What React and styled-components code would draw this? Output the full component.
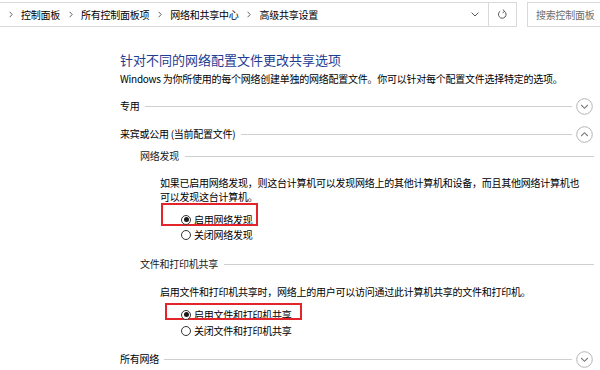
import styled, { createGlobalStyle } from "styled-components";

const GlobalStyle = createGlobalStyle`
  html, body {
    margin: 0;
    padding: 0;
    background: #ffffff;
    overflow: hidden;
  }
  body {
    width: 600px;
    height: 370px;
    font-family: "Noto Sans CJK SC", "Noto Sans", sans-serif;
    letter-spacing: -0.25px;
    color: #000000;
  }
`;

function CircleChevron({ up }) {
  return (
    <svg width="17" height="17" viewBox="0 0 17 17">
      <circle cx="8.5" cy="8.5" r="7.8" fill="#ffffff" stroke="#b4b4b4" strokeWidth="1" />
      <path
        d={up ? "M5.2 10 L8.5 6.7 L11.8 10" : "M5.2 7 L8.5 10.3 L11.8 7"}
        fill="none"
        stroke="#7a7a7a"
        strokeWidth="1.1"
      />
    </svg>
  );
}

function CrumbChevron() {
  return (
    <svg width="4" height="7" viewBox="0 0 4 7">
      <path d="M0.6 0.8 L3.2 3.5 L0.6 6.2" fill="none" stroke="#606060" strokeWidth="1" />
    </svg>
  );
}

function RefreshIcon() {
  return (
    <svg width="11" height="11" viewBox="0 0 11 11">
      <path d="M7.6 2.4 A3.8 3.8 0 1 1 3.2 2.2" fill="none" stroke="#555" strokeWidth="1" />
      <path d="M5.8 0.6 L7.8 2.4 L5.6 3.8" fill="none" stroke="#555" strokeWidth="1" />
    </svg>
  );
}

export default function App() {
  return (
    <>
      <GlobalStyle />
      <TopBar>
        <AddressBox>
          <Crumbs>
            {["控制面板", "所有控制面板项", "网络和共享中心", "高级共享设置"].map((c) => (
              <Crumb key={c}>
                <Sep>
                  <CrumbChevron />
                </Sep>
                {c}
              </Crumb>
            ))}
          </Crumbs>
          <DropButton>
            <svg width="8" height="5" viewBox="0 0 8 5">
              <path d="M0.6 0.6 L4 4 L7.4 0.6" fill="none" stroke="#555" strokeWidth="1" />
            </svg>
          </DropButton>
          <RefreshButton>
            <RefreshIcon />
          </RefreshButton>
        </AddressBox>
        <SearchBox>搜索控制面板</SearchBox>
      </TopBar>

      <Content>
        <Title>针对不同的网络配置文件更改共享选项</Title>
        <Text $mt={4}>
          Windows 为你所使用的每个网络创建单独的网络配置文件。你可以针对每个配置文件选择特定的选项。
        </Text>

        <ProfileRow $mt={11}>
          <span>专用</span>
          <Rule />
          <CircleChevron />
        </ProfileRow>

        <ProfileRow $mt={10}>
          <span>来宾或公用 (当前配置文件)</span>
          <Rule />
          <CircleChevron up />
        </ProfileRow>

        <SubHeader $mt={6}>
          <span>网络发现</span>
          <Rule />
        </SubHeader>
        <Body>
          <Text $mt={13}>
            如果已启用网络发现，则这台计算机可以发现网络上的其他计算机和设备，而且其他网络计算机也
            <br />
            可以发现这台计算机。
          </Text>
          <RadioGroup $mt={8} $gap={0}>
            <Option $hl={{ left: -20, top: -9, width: 97, height: 23 }}>
              <Radio $checked />
              启用网络发现
            </Option>
            <Option>
              <Radio />
              关闭网络发现
            </Option>
          </RadioGroup>
        </Body>

        <SubHeader $mt={15}>
          <span>文件和打印机共享</span>
          <Rule />
        </SubHeader>
        <Body>
          <Text $mt={14}>启用文件和打印机共享时，网络上的用户可以访问通过此计算机共享的文件和打印机。</Text>
          <RadioGroup $mt={8} $gap={1}>
            <Option $hl={{ left: -16, top: -4, width: 137, height: 17 }}>
              <Radio $checked />
              启用文件和打印机共享
            </Option>
            <Option>
              <Radio />
              关闭文件和打印机共享
            </Option>
          </RadioGroup>
        </Body>

        <ProfileRow $mt={12}>
          <span>所有网络</span>
          <Rule />
          <CircleChevron />
        </ProfileRow>
      </Content>
    </>
  );
}

const TopBar = styled.div`
  display: flex;
  gap: 10px;
  padding-top: 2px;
  height: 25px;
`;

const AddressBox = styled.div`
  display: flex;
  align-items: stretch;
  width: 518px;
  margin-left: -1px;
  border: 1px solid #d9d9d9;
  box-sizing: border-box;
  flex-shrink: 0;
`;

const Crumbs = styled.div`
  flex: 1;
  display: flex;
  align-items: center;
  font-size: 10px;
  line-height: 12px;
`;

const Crumb = styled.span`
  display: inline-flex;
  align-items: center;
`;

const Sep = styled.span`
  display: inline-flex;
  justify-content: center;
  align-items: center;
  width: 21px;
`;

const DropButton = styled.div`
  width: 24px;
  display: flex;
  align-items: center;
  justify-content: center;
  margin-right: 1px;
`;

const RefreshButton = styled.div`
  width: 27px;
  display: flex;
  align-items: center;
  justify-content: center;
  border-left: 1px solid #d9d9d9;
`;

const SearchBox = styled.div`
  flex-shrink: 0;
  width: 100px;
  border: 1px solid #d9d9d9;
  box-sizing: border-box;
  display: flex;
  align-items: center;
  padding-left: 8px;
  font-size: 10px;
  color: #6d6d6d;
`;

const Content = styled.div`
  padding: 0 7px 0 120px;
`;

const Title = styled.div`
  margin-top: 25px;
  font-size: 13px;
  line-height: 16px;
  letter-spacing: 0;
  color: #1f3c92;
`;

const Text = styled.div`
  margin-top: ${(p) => p.$mt || 0}px;
  font-size: 10px;
  line-height: 14px;
  white-space: nowrap;
`;

const ProfileRow = styled.div`
  margin-top: ${(p) => p.$mt || 0}px;
  display: flex;
  align-items: center;
  gap: 5px;
  height: 18px;
  font-size: 10px;
  line-height: 14px;

  svg {
    flex-shrink: 0;
  }
`;

const Rule = styled.div`
  flex: 1;
  height: 1px;
  background: #cfcfcf;
  margin-right: -1px;
`;

const SubHeader = styled.div`
  margin-top: ${(p) => p.$mt || 0}px;
  margin-left: 20px;
  display: flex;
  align-items: center;
  gap: 6px;
  height: 14px;
  font-size: 10px;
  line-height: 14px;
  color: #1a1a1a;
`;

const Body = styled.div`
  margin-left: 40px;
`;

const RadioGroup = styled.div`
  margin-top: ${(p) => p.$mt || 0}px;
  margin-left: 21px;
  display: flex;
  flex-direction: column;
  gap: ${(p) => p.$gap}px;
`;

const Option = styled.div`
  position: relative;
  display: flex;
  align-items: center;
  gap: 3px;
  height: 15px;
  font-size: 10px;
  line-height: 14px;

  &::before {
    content: "";
    display: ${(p) => (p.$hl ? "block" : "none")};
    position: absolute;
    left: ${(p) => (p.$hl ? p.$hl.left : 0)}px;
    top: ${(p) => (p.$hl ? p.$hl.top : 0)}px;
    width: ${(p) => (p.$hl ? p.$hl.width : 0)}px;
    height: ${(p) => (p.$hl ? p.$hl.height : 0)}px;
    border: 2px solid #e3242b;
    box-sizing: border-box;
  }
`;

const Radio = styled.span`
  position: relative;
  width: 10px;
  height: 10px;
  border: 1px solid #333333;
  border-radius: 50%;
  box-sizing: border-box;
  background: #ffffff;
  flex-shrink: 0;

  &::after {
    content: "";
    display: ${(p) => (p.$checked ? "block" : "none")};
    position: absolute;
    left: 1.5px;
    top: 1.5px;
    width: 5px;
    height: 5px;
    border-radius: 50%;
    background: #1a1a1a;
  }
`;
